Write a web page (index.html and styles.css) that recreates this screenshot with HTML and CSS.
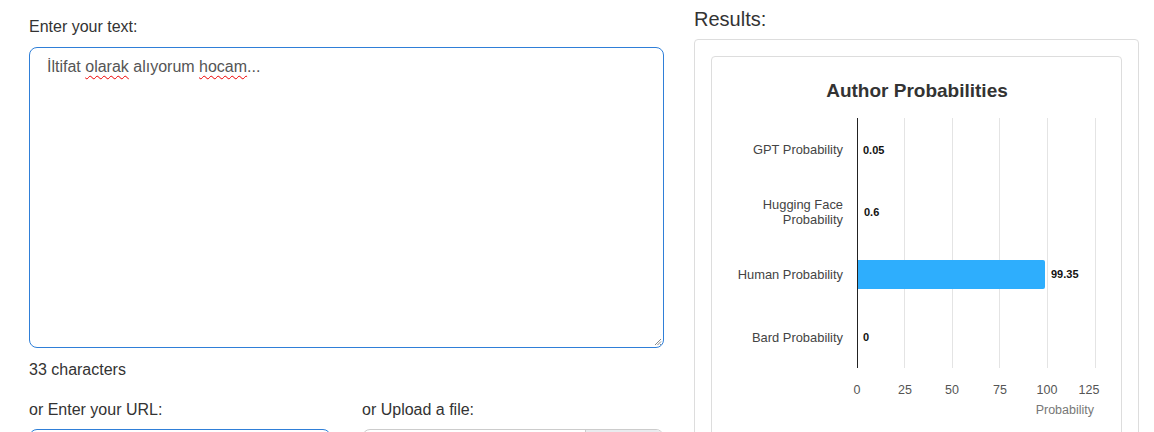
FILE: index.html
```html
<!DOCTYPE html>
<html>
<head>
<meta charset="utf-8">
<link rel="stylesheet" href="styles.css">
</head>
<body>
<div class="page">
  <div class="left">
    <label class="lbl">Enter your text:</label>
    <div class="textarea">
      <div class="ta-text">İltifat <span class="sp">olarak</span> alıyorum <span class="sp">hocam</span>...</div>
      <svg class="grip" width="10" height="10" viewBox="0 0 10 10">
        <path d="M9 3 L3 9 M9 5.5 L5.5 9 M9 8 L8 9" stroke="#8a8a8a" stroke-width="1"/>
      </svg>
    </div>
    <div class="count">33 characters</div>
    <div class="row2">
      <div class="field">
        <label class="lbl">or Enter your URL:</label>
        <div class="input url"></div>
      </div>
      <div class="field">
        <label class="lbl">or Upload a file:</label>
        <div class="input file"><span class="file-name"></span><span class="file-btn"></span></div>
      </div>
    </div>
  </div>
  <div class="right">
    <h2 class="results">Results:</h2>
    <div class="card">
      <div class="inner">
        <svg class="chart" width="409" height="400" viewBox="0 0 409 400">
          <text x="205" y="40" class="title" text-anchor="middle">Author Probabilities</text>
          <g stroke="#e4e4e4" stroke-width="1">
            <line x1="192.5" y1="61" x2="192.5" y2="311"/>
            <line x1="240.5" y1="61" x2="240.5" y2="311"/>
            <line x1="287.5" y1="61" x2="287.5" y2="311"/>
            <line x1="335.5" y1="61" x2="335.5" y2="311"/>
            <line x1="383.5" y1="61" x2="383.5" y2="311"/>
          </g>
          <path d="M145 203 H331 Q333 203 333 205 V230 Q333 232 331 232 H145 Z" fill="#2eaefd"/>
          <line x1="145.5" y1="61" x2="145.5" y2="311" stroke="#222" stroke-width="1"/>
          <g class="cat" text-anchor="end">
            <text x="131" y="97">GPT Probability</text>
            <text x="131" y="152">Hugging Face</text>
            <text x="131" y="166.5">Probability</text>
            <text x="131" y="221.5">Human Probability</text>
            <text x="131" y="284.5">Bard Probability</text>
          </g>
          <g class="val">
            <text x="151" y="97">0.05</text>
            <text x="152" y="159">0.6</text>
            <text x="339" y="221">99.35</text>
            <text x="151" y="284">0</text>
          </g>
          <g class="tick" text-anchor="middle">
            <text x="145" y="337">0</text>
            <text x="193" y="337">25</text>
            <text x="240" y="337">50</text>
            <text x="288" y="337">75</text>
            <text x="335" y="337">100</text>
            <text x="377" y="337">125</text>
          </g>
          <text x="382" y="356.5" class="axis-title" text-anchor="end">Probability</text>
        </svg>
      </div>
    </div>
  </div>
</div>
</body>
</html>
```
FILE: styles.css
```css
* { box-sizing: border-box; }
html, body { margin: 0; padding: 0; background: #fff; }
body {
  font-family: "Liberation Sans", Arial, sans-serif;
  color: #333;
  overflow: hidden;
}
.page {
  display: grid;
  grid-template-columns: 635px 445px;
  column-gap: 30px;
  padding-left: 29px;
}
.left { padding-top: 17px; }
.lbl {
  display: block;
  font-size: 16px;
  line-height: 20px;
  color: #333;
}
.textarea {
  position: relative;
  margin-top: 10px;
  height: 301px;
  border: 1px solid #2f7fd8;
  border-radius: 8px;
  padding: 8px 17px;
}
.ta-text {
  font-size: 16px;
  line-height: 22px;
  color: #555;
}
.sp {
  text-decoration: underline wavy #e00;
  text-decoration-thickness: 1px;
  text-underline-offset: 3px;
  text-decoration-skip-ink: none;
}
.grip {
  position: absolute;
  right: 1px;
  bottom: 1px;
}
.count {
  margin-top: 12px;
  font-size: 16px;
  line-height: 20px;
}
.row2 {
  margin-top: 20px;
  display: grid;
  grid-template-columns: 302px 302px;
  column-gap: 31px;
}
.input {
  margin-top: 9px;
  height: 36px;
  border-radius: 8px;
}
.input.url { border: 1px solid #2f7fd8; }
.input.file {
  border: 1px solid #ccc;
  display: flex;
  overflow: hidden;
}
.file-name { flex: 1; }
.file-btn {
  width: 78px;
  background: #e9ecef;
  border-left: 1px solid #ccc;
}
.right { padding-top: 7px; }
.results {
  margin: 0;
  font-size: 20px;
  line-height: 24px;
  font-weight: normal;
  color: #333;
}
.card {
  margin-top: 8px;
  border: 1px solid #ddd;
  border-radius: 4px;
  padding: 16px 16px 0 16px;
  height: 420px;
}
.inner {
  border: 1px solid #ddd;
  border-radius: 4px;
  height: 410px;
}
.chart { display: block; }
.chart text { font-family: "Liberation Sans", Arial, sans-serif; }
.title { font-size: 19px; font-weight: bold; fill: #333; }
.cat text { font-size: 12.9px; fill: #444; }
.val text { font-size: 11px; font-weight: bold; fill: #111; }
.tick text { font-size: 12.5px; fill: #555; }
.axis-title { font-size: 12.5px; fill: #777; }
```
